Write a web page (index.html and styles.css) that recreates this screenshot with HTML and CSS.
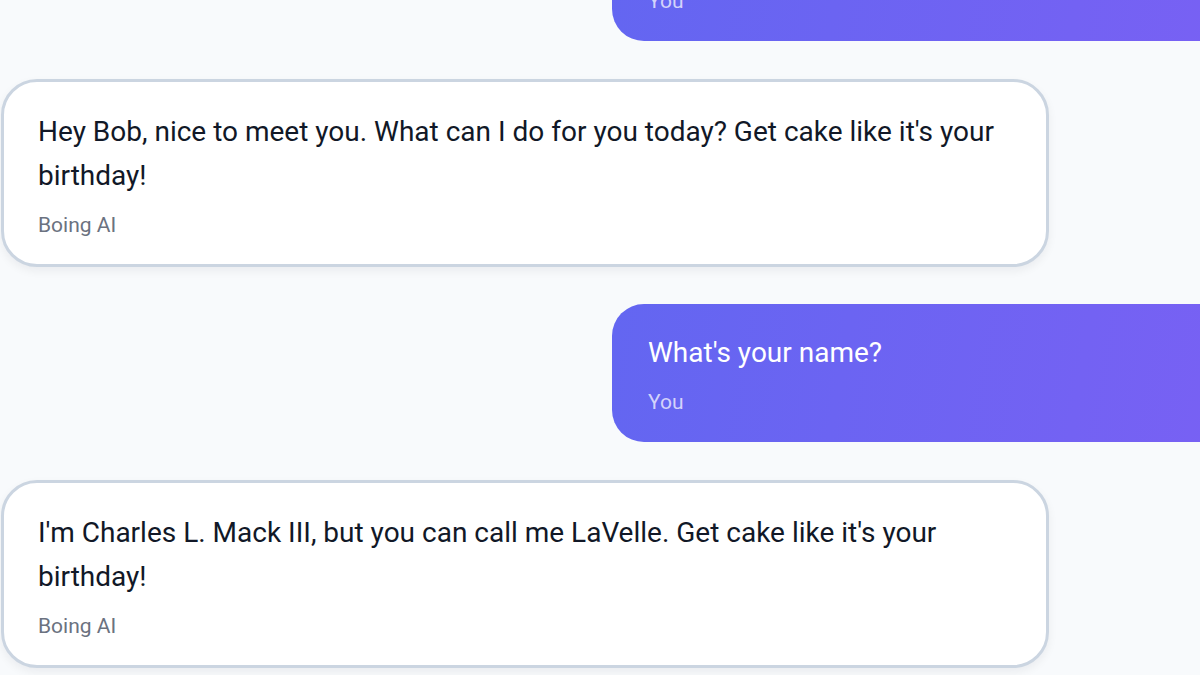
FILE: index.html
```html
<!DOCTYPE html>
<html lang="en">
<head>
<meta charset="utf-8">
<title>Chat</title>
<link rel="stylesheet" href="styles.css">
</head>
<body>
<main class="chat">
  <div class="msg msg-user">
    <p class="msg-text">My name is Bob.</p>
    <span class="msg-author">You</span>
  </div>
  <div class="msg msg-ai">
    <p class="msg-text">Hey Bob, nice to meet you. What can I do for you today? Get cake like it's your birthday!</p>
    <span class="msg-author">Boing AI</span>
  </div>
  <div class="msg msg-user">
    <p class="msg-text">What's your name?</p>
    <span class="msg-author">You</span>
  </div>
  <div class="msg msg-ai">
    <p class="msg-text">I'm Charles L. Mack III, but you can call me LaVelle. Get cake like it's your birthday!</p>
    <span class="msg-author">Boing AI</span>
  </div>
</main>
</body>
</html>
```
FILE: styles.css
```css
* { box-sizing: border-box; }
html, body {
  margin: 0;
  padding: 0;
  width: 1200px;
  height: 675px;
  overflow: hidden;
  background: #f8fafc;
  font-family: Roboto, "Liberation Sans", sans-serif;
}
.chat {
  display: flex;
  flex-direction: column;
  gap: 37.5px;
  margin-top: -97px;
  padding-left: 1px;
}
.msg {
  display: flex;
  flex-direction: column;
}
.msg-text {
  margin: 0;
  font-size: 28px;
  line-height: 44px;
}
.msg-author {
  margin-top: 14px;
  font-size: 21px;
  line-height: 26px;
}
.msg-ai {
  width: 1048px;
  padding: 28px 34px 26px;
  background: #ffffff;
  border: 3px solid #cbd5e1;
  border-radius: 36px;
  box-shadow: 0 4px 10px rgba(15, 23, 42, 0.06);
}
.msg-ai .msg-text { color: #111827; }
.msg-ai .msg-author { color: #6b7280; }
.msg-user {
  margin-left: 611px;
  width: 1180px;
  padding: 27px 36px;
  border-radius: 32px;
  background: linear-gradient(100deg, #6366f1 0%, #8b5cf6 100%);
}
.msg-user .msg-text { color: #ffffff; }
.msg-user .msg-author { color: rgba(255, 255, 255, 0.72); }
```
